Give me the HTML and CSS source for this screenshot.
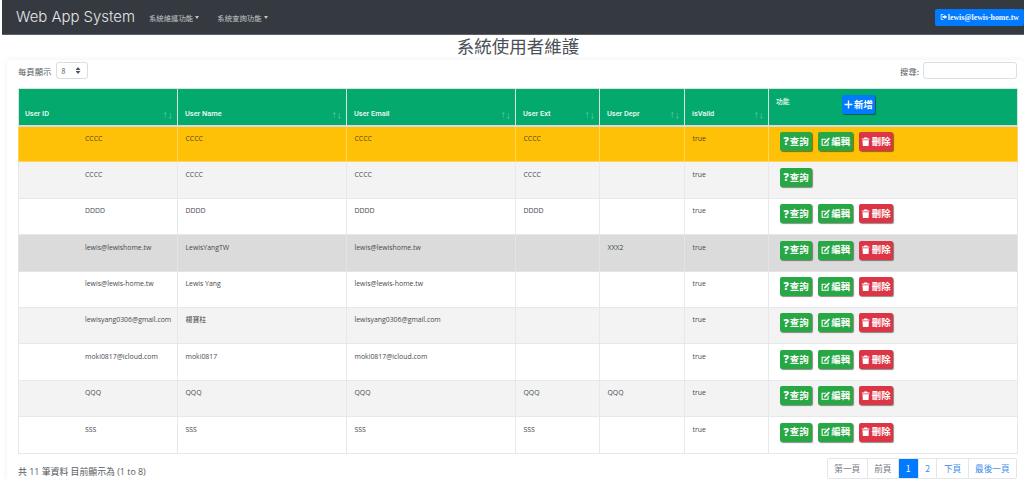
FILE: index.html
```html
<!DOCTYPE html>
<html lang="zh-Hant">
<head>
<meta charset="utf-8">
<title>系統使用者維護</title>
<link rel="stylesheet" href="styles.css">
</head>
<body>
<svg class="defs" width="0" height="0" aria-hidden="true">
  <symbol id="i-edit" viewBox="0 0 16 16"><path d="M1 3h8.500l-1.800 1.800H2.800v8.400h8.400V9l1.800-1.800V15H1z" fill="currentColor"/><path d="M13.200.8l2.200 2.200-7.600 7.600-2.800.6.600-2.800z" fill="currentColor"/></symbol>
  <symbol id="i-trash" viewBox="0 0 16 16"><path d="M5.500 1h5l.7 1.400H14.500v2H1.500v-2h3.300zM2.500 5.500h11l-.7 10H3.200z" fill="currentColor"/></symbol>
  <symbol id="i-plus" viewBox="0 0 16 16"><path d="M6.800 1h2.400v5.800H15v2.400H9.200V15H6.800V9.200H1V6.800h5.800z" fill="currentColor"/></symbol>
  <symbol id="i-login" viewBox="0 0 16 16"><path d="M7 2H3.500A2 2 0 0 0 1.500 4v8a2 2 0 0 0 2 2H7v-1.600H3.800a.7.700 0 0 1-.7-.7V4.300a.7.700 0 0 1 .7-.7H7z" fill="currentColor"/><path d="M9 3.500L15 8l-6 4.500V10H5V6h4z" fill="currentColor"/></symbol>
</svg>

<header class="navbar">
  <a class="brand">Web App System</a>
  <a class="nav-link">系統維護功能<span class="caret"></span></a>
  <a class="nav-link">系統查詢功能<span class="caret"></span></a>
  <button class="user-btn"><svg class="ico"><use href="#i-login"/></svg>lewis@lewis-home.tw</button>
</header>

<h1 class="title">系統使用者維護</h1>

<main class="card">
  <div class="controls">
    <label class="length">每頁顯示
      <span class="select"><span>8</span><span class="updown"></span></span>
    </label>
    <label class="search">搜尋:<input class="search-input" type="text"></label>
  </div>

  <table class="grid">
    <colgroup>
      <col class="c1"><col class="c2"><col class="c3"><col class="c4"><col class="c5"><col class="c6"><col class="c7">
    </colgroup>
    <thead>
      <tr>
        <th>User ID<span class="sort">↑↓</span></th>
        <th>User Name<span class="sort">↑↓</span></th>
        <th>User Email<span class="sort">↑↓</span></th>
        <th>User Ext<span class="sort">↑↓</span></th>
        <th>User Depr<span class="sort">↑↓</span></th>
        <th>isVaild<span class="sort">↑↓</span></th>
        <th class="act-head"><span class="act-label">功能</span><button class="btn blue add"><svg class="ico"><use href="#i-plus"/></svg>新增</button></th>
      </tr>
    </thead>
    <tbody>
      <tr class="r-amber"><td>CCCC</td><td>CCCC</td><td>CCCC</td><td>CCCC</td><td></td><td>true</td>
        <td><div class="acts"><button class="btn green q"><b>?</b>查詢</button><button class="btn green e"><svg class="ico"><use href="#i-edit"/></svg>編輯</button><button class="btn red d"><svg class="ico"><use href="#i-trash"/></svg>刪除</button></div></td></tr>
      <tr class="r-odd"><td>CCCC</td><td>CCCC</td><td>CCCC</td><td>CCCC</td><td></td><td>true</td>
        <td><div class="acts"><button class="btn green q"><b>?</b>查詢</button></div></td></tr>
      <tr><td>DDDD</td><td>DDDD</td><td>DDDD</td><td>DDDD</td><td></td><td>true</td>
        <td><div class="acts"><button class="btn green q"><b>?</b>查詢</button><button class="btn green e"><svg class="ico"><use href="#i-edit"/></svg>編輯</button><button class="btn red d"><svg class="ico"><use href="#i-trash"/></svg>刪除</button></div></td></tr>
      <tr class="r-grey"><td>lewis@lewishome.tw</td><td>LewisYangTW</td><td>lewis@lewishome.tw</td><td></td><td>XXX2</td><td>true</td>
        <td><div class="acts"><button class="btn green q"><b>?</b>查詢</button><button class="btn green e"><svg class="ico"><use href="#i-edit"/></svg>編輯</button><button class="btn red d"><svg class="ico"><use href="#i-trash"/></svg>刪除</button></div></td></tr>
      <tr><td>lewis@lewis-home.tw</td><td>Lewis Yang</td><td>lewis@lewis-home.tw</td><td></td><td></td><td>true</td>
        <td><div class="acts"><button class="btn green q"><b>?</b>查詢</button><button class="btn green e"><svg class="ico"><use href="#i-edit"/></svg>編輯</button><button class="btn red d"><svg class="ico"><use href="#i-trash"/></svg>刪除</button></div></td></tr>
      <tr class="r-odd"><td>lewisyang0306@gmail.com</td><td>楊寶柱</td><td>lewisyang0306@gmail.com</td><td></td><td></td><td>true</td>
        <td><div class="acts"><button class="btn green q"><b>?</b>查詢</button><button class="btn green e"><svg class="ico"><use href="#i-edit"/></svg>編輯</button><button class="btn red d"><svg class="ico"><use href="#i-trash"/></svg>刪除</button></div></td></tr>
      <tr><td>moki0817@icloud.com</td><td>moki0817</td><td>moki0817@icloud.com</td><td></td><td></td><td>true</td>
        <td><div class="acts"><button class="btn green q"><b>?</b>查詢</button><button class="btn green e"><svg class="ico"><use href="#i-edit"/></svg>編輯</button><button class="btn red d"><svg class="ico"><use href="#i-trash"/></svg>刪除</button></div></td></tr>
      <tr class="r-odd"><td>QQQ</td><td>QQQ</td><td>QQQ</td><td>QQQ</td><td>QQQ</td><td>true</td>
        <td><div class="acts"><button class="btn green q"><b>?</b>查詢</button><button class="btn green e"><svg class="ico"><use href="#i-edit"/></svg>編輯</button><button class="btn red d"><svg class="ico"><use href="#i-trash"/></svg>刪除</button></div></td></tr>
      <tr><td>SSS</td><td>SSS</td><td>SSS</td><td>SSS</td><td></td><td>true</td>
        <td><div class="acts"><button class="btn green q"><b>?</b>查詢</button><button class="btn green e"><svg class="ico"><use href="#i-edit"/></svg>編輯</button><button class="btn red d"><svg class="ico"><use href="#i-trash"/></svg>刪除</button></div></td></tr>
    </tbody>
  </table>

  <div class="foot">
    <div class="info">共 11 筆資料 目前顯示為 (1 to 8)</div>
    <nav class="pager">
      <a class="pg muted">第一頁</a><a class="pg muted">前頁</a><a class="pg on">1</a><a class="pg">2</a><a class="pg">下頁</a><a class="pg">最後一頁</a>
    </nav>
  </div>
</main>
</body>
</html>
```

FILE: styles.css
```css
* { box-sizing: border-box; }
html, body { margin: 0; padding: 0; height: 479px; overflow: hidden; }
body {
  background: #fff;
  color: #495057;
  font-family: "Open Sans", "Noto Sans CJK TC", sans-serif;
  font-size: 9px;
}
.defs { position: absolute; }
.ico { width: 1em; height: 1em; vertical-align: -0.12em; flex: none; }

.navbar {
  height: 35px;
  margin-left: 2px;
  padding: 0 0 0 14px;
  background: #343a40;
  border-bottom: 1px solid #5c6167;
  display: flex;
  align-items: center;
}
.brand {
  font-family: "Inter", "Open Sans", sans-serif;
  font-size: 14.900px;
  font-weight: 300;
  color: #e4e6e8;
  margin-right: 14px;
}
.nav-link {
  color: #c3c5c8;
  font-family: "Noto Sans CJK TC", sans-serif;
  font-size: 7.400px;
  margin-right: 18px;
  display: flex;
  align-items: center;
}
.caret {
  display: inline-block;
  margin-left: 2px;
  border-top: 3px solid #c3c5c8;
  border-left: 2.500px solid transparent;
  border-right: 2.500px solid transparent;
}
.user-btn {
  margin-left: auto;
  width: 89px;
  height: 17px;
  padding: 0;
  border: 0;
  border-radius: 2px;
  background: #007bff;
  color: #f4f8ff;
  font-family: "Liberation Serif", serif;
  font-size: 7.800px;
  font-weight: 700;
  white-space: nowrap;
}

.title {
  margin: 0;
  height: 25px;
  padding-left: 12px;
  text-align: center;
  font-family: "Noto Sans CJK TC", sans-serif;
  font-size: 17.500px;
  line-height: 22px;
  font-weight: 400;
  color: #4a5056;
}

.card {
  margin-left: 7px;
  padding: 0 7px 0 11px;
  height: 419px;
  background: #fff;
  border-radius: 3px;
  box-shadow: 0 0 6px rgba(0, 0, 0, 0.07);
}
.controls {
  height: 28px;
  padding-top: 2px;
  display: flex;
  justify-content: space-between;
  align-items: flex-start;
}
.length, .search {
  display: flex;
  align-items: center;
  gap: 4px;
  font-family: "Noto Sans CJK TC", sans-serif;
  font-size: 8.400px;
  color: #555b61;
}
.select {
  width: 32px;
  height: 17px;
  padding: 0 6px 0 5px;
  border: 1px solid #d9dde1;
  border-radius: 3px;
  font-size: 7px;
  display: flex;
  justify-content: space-between;
  align-items: center;
}
.updown {
  width: 5px;
  height: 7px;
  background: #50565c;
  clip-path: path("M2.500 0L5 3H0zM2.500 7L5 4H0z");
}
.search-input {
  width: 94px;
  height: 17px;
  padding: 0;
  border: 1px solid #dce0e3;
  border-radius: 3px;
  background: #fff;
}

.grid {
  width: 999px;
  table-layout: fixed;
  border-collapse: collapse;
  border: 1px solid #dee2e6;
}
.c1 { width: 159px; }
.c2, .c3 { width: 169px; }
.c4 { width: 84px; }
.c5 { width: 85px; }
.c6 { width: 84px; }
.c7 { width: 249px; }

.grid th {
  height: 37px;
  padding: 0 7px 4px 7px;
  position: relative;
  background: #04aa6d;
  border: 1px solid #d8e6e0;
  border-bottom: 2px solid #d8dcdc;
  text-align: left;
  vertical-align: bottom;
  color: #f1faf6;
  font-family: "Roboto", "Noto Sans CJK TC", sans-serif;
  font-size: 7.400px;
  font-weight: 500;
  line-height: 14px;
}
.grid th:first-child { padding-left: 6px; }
.sort {
  position: absolute;
  right: 5px;
  bottom: 2px;
  font-size: 6.500px;
  letter-spacing: -1.500px;
  font-weight: 400;
  color: rgba(255, 255, 255, 0.4);
}
.grid th.act-head {
  vertical-align: top;
  padding: 5px 0 0 7px;
  font-size: 6.800px;
  font-family: "Noto Sans CJK TC", sans-serif;
}
.add {
  position: absolute;
  left: 73px;
  top: 6px;
  width: 33px;
  height: 18px;
}

.grid td {
  height: 36.400px;
  padding: 6.500px 7.500px 0;
  border: 1px solid #e6e8ea;
  vertical-align: top;
  font-size: 6.900px;
  line-height: 11px;
  color: #45494e;
  white-space: nowrap;
  overflow: hidden;
}
.grid td:first-child { padding-left: 66px; }
.r-amber td { background: #ffc107; border-color: #ffd45a; color: #4f4624; }
.r-odd td { background: #f3f3f3; }
.r-grey td { background: #dbdbdb; border-color: #e4e4e4; }

.grid td:last-child { padding: 5.500px 0 0 11px; }
.acts { display: flex; gap: 6px; }
.btn {
  height: 19px;
  padding: 0;
  border: 0;
  border-radius: 2px;
  font-family: "Noto Sans CJK TC", sans-serif;
  font-size: 9.400px;
  font-weight: 700;
  line-height: 1;
  color: #fff;
  display: inline-flex;
  align-items: center;
  justify-content: center;
  gap: 1px;
  box-shadow: 1px 1px 1px rgba(0, 0, 0, 0.45);
}
.btn b { font-size: 10.500px; font-family: "Open Sans", sans-serif; font-weight: 800; }
.green { background: #28a745; }
.red { background: #dc3545; }
.blue { background: #007bff; }
.q { width: 32px; }
.e { width: 35px; }
.d { width: 34px; }
.add .ico { width: 9px; height: 9px; }

.foot {
  display: flex;
  justify-content: space-between;
  align-items: flex-start;
  padding-top: 4px;
  width: 999px;
}
.info {
  padding-top: 7px;
  font-family: "Open Sans", "Noto Sans CJK TC", sans-serif;
  font-size: 8.900px;
  color: #55595e;
}
.pager {
  display: flex;
  height: 21px;
  font-family: "Noto Sans CJK TC", sans-serif;
  font-size: 8.600px;
  border: 1px solid #e4e7ea;
  border-radius: 2px;
}
.pg {
  padding: 0 6.500px;
  line-height: 19px;
  color: #3f8fe8;
  border-left: 1px solid #e4e7ea;
}
.pg:first-child { border-left: 0; }
.pg.muted { color: #747b82; }
.pg.on { background: #007bff; color: #fff; padding: 0 7px; }
```
